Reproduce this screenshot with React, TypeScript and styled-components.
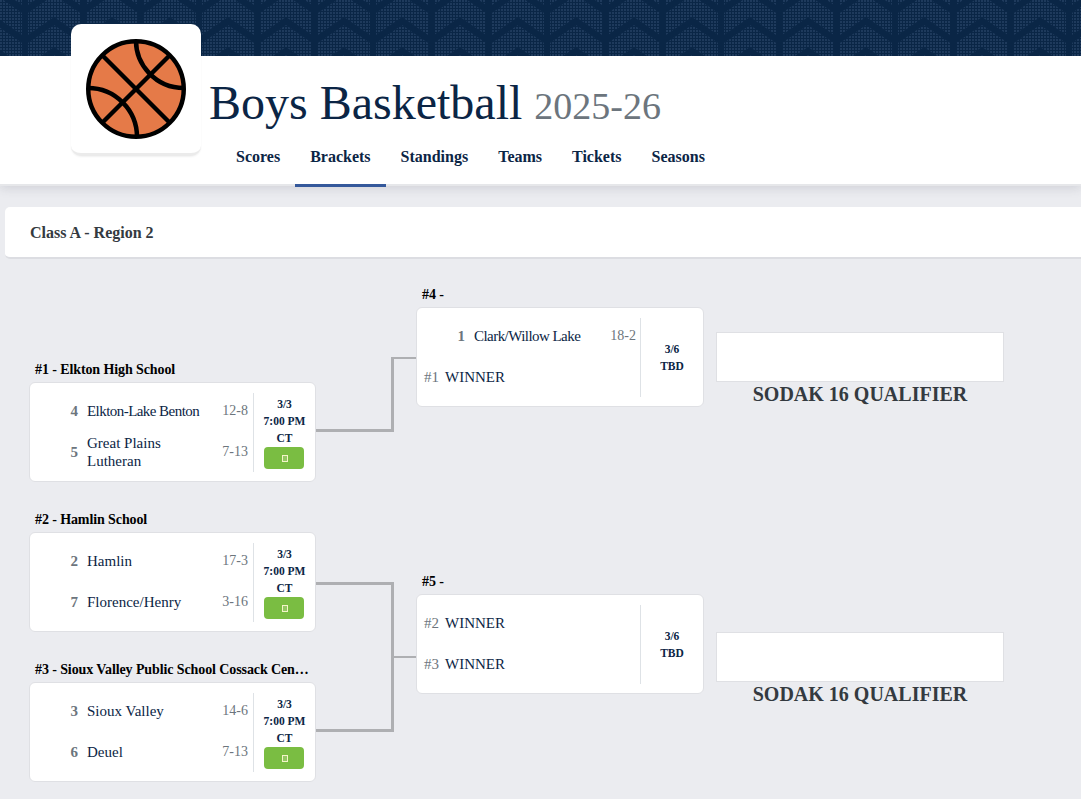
import React from 'react'
import styled, { createGlobalStyle } from 'styled-components'

const GlobalStyle = createGlobalStyle`
  html, body {
    margin: 0;
    padding: 0;
    background: #ebecf0;
    font-family: "Liberation Serif", "Times New Roman", serif;
    color: #0b2545;
  }
  * { box-sizing: border-box; }
`
const Page = styled.div`
  width: 1081px;
  height: 799px;
  overflow: hidden;
`
const Banner = styled.svg`
  display: block;
  width: 100%;
  height: 56px;
`
const Header = styled.header`
  height: 130px;
  background: #fff;
  display: flex;
  padding-left: 71px;
  border-bottom: 2px solid #e6e7ea;
  box-shadow: 0 2px 10px rgba(60, 64, 80, 0.16);
`
const LogoCard = styled.div`
  width: 130px;
  height: 132px;
  margin-top: -32px;
  background: #fff;
  border-radius: 10px;
  border-bottom: 3px solid #ebebeb;
  box-shadow: 0 1px 2px rgba(0, 0, 0, 0.06);
  display: flex;
  align-items: center;
  justify-content: center;
  flex-shrink: 0;
  position: relative;
`
const HeaderBody = styled.div`
  padding-left: 8px;
  display: flex;
  flex-direction: column;
`
const Title = styled.h1`
  margin: 17px 0 0;
  font-size: 48px;
  line-height: 60px;
  font-weight: 400;
  color: #0b2545;
  white-space: nowrap;
`
const Season = styled.span`
  font-size: 38px;
  color: #6c757d;
`
const Nav = styled.nav`
  display: flex;
  margin-top: 9px;
  padding-left: 12px;
`
const NavItem = styled.a<{ $active?: boolean }>`
  height: 42px;
  padding: 3px 15px 0;
  font-size: 16px;
  line-height: 18px;
  font-weight: 700;
  color: #0b2545;
  border-bottom: 3px solid ${p => (p.$active ? '#34589b' : 'transparent')};
`
const Section = styled.div`
  margin: 21px 0 0 5px;
  height: 52px;
  background: #fff;
  border-radius: 5px 0 0 5px;
  border-bottom: 2px solid #dcdde2;
  padding: 17px 0 0 25px;
  font-size: 16px;
  line-height: 18px;
  font-weight: 700;
  color: #343a40;
`
const Bracket = styled.div`
  display: flex;
  padding-left: 29px;
`
const Column = styled.div<{ $top: number; $width: number }>`
  width: ${p => p.$width}px;
  flex-shrink: 0;
  padding-top: ${p => p.$top}px;
  display: flex;
  flex-direction: column;
`
const GameHead = styled.div`
  height: 20px;
  padding: 0 6px 0 6px;
  font-size: 14px;
  line-height: 16px;
  font-weight: 700;
  letter-spacing: -0.1px;
  color: #000;
  white-space: nowrap;
  overflow: hidden;
  text-overflow: ellipsis;
`
const Game = styled.div<{ $gap?: number }>`
  height: 100px;
  margin-bottom: ${p => p.$gap ?? 0}px;
  background: #fff;
  border: 1px solid #dfe0e4;
  border-radius: 6px;
  display: flex;
  padding: 10px 0 9px 0;
`
const Teams = styled.div<{ $wide?: boolean }>`
  flex: 1;
  min-width: 0;
  display: grid;
  grid-template-rows: 41px 41px;
  margin-top: -3px;
  padding-right: ${p => (p.$wide ? 4 : 5)}px;
`
const Team = styled.div`
  display: flex;
  align-items: center;
  font-size: 15px;
  line-height: 18px;
`
const Seed = styled.span`
  width: 48px;
  text-align: right;
  font-weight: 700;
  color: #6c757d;
  flex-shrink: 0;
`
const Name = styled.span<{ $tight?: boolean; $flush?: boolean }>`
  flex: 1;
  padding-left: ${p => (p.$flush ? 0 : 9)}px;
  padding-right: 4px;
  letter-spacing: ${p => (p.$tight ? '-0.55px' : 'normal')};
  color: #0b2545;
`
const Record = styled.span`
  font-size: 14px;
  color: #6c757d;
`
const WinnerSeed = styled.span`
  padding-left: 7px;
  width: 28px;
  color: #6c757d;
  flex-shrink: 0;
`
const Info = styled.div<{ $wide?: boolean }>`
  width: ${p => (p.$wide ? 63 : 62)}px;
  flex-shrink: 0;
  border-left: 1px solid #dee2e6;
  display: flex;
  flex-direction: column;
  align-items: center;
  justify-content: center;
  font-size: 11.5px;
  line-height: 17px;
  font-weight: 700;
  text-align: center;
  color: #0b2545;
`
const Watch = styled.div`
  width: 40px;
  height: 22px;
  margin-right: 1px;
  background: #7abd42;
  border-radius: 4px;
  display: flex;
  align-items: center;
  justify-content: center;
`
const Missing = styled.span`
  width: 6px;
  height: 7px;
  margin-left: 1px;
  border: 1px solid #f4f4c8;
  background: #93c763;
`
const Connectors = styled.div`
  width: 100px;
  flex-shrink: 0;
  display: flex;
  flex-direction: column;
`
const TopLink = styled.div`
  margin-top: 98px;
  height: 75px;
  display: flex;
`
const LinkArm = styled.div`
  width: 78px;
  border-right: 3px solid #aeafb2;
  border-bottom: 3px solid #aeafb2;
`
const LinkTip = styled.div`
  flex: 1;
  height: 2px;
  background: #aeafb2;
`
const BottomLink = styled.div`
  margin-top: 150px;
  height: 150px;
  display: flex;
  align-items: center;
`
const Fork = styled.div`
  width: 78px;
  height: 100%;
  border: 3px solid #aeafb2;
  border-left: 0;
`
const Result = styled.div`
  margin-left: 12px;
  padding-top: 73px;
  display: flex;
  flex-direction: column;
  width: 288px;
`
const ResultBox = styled.div`
  height: 50px;
  background: #fff;
  border: 1px solid #dfe0e4;
`
const ResultLabel = styled.div`
  height: 250px;
  padding-top: 1px;
  text-align: center;
  font-size: 20px;
  line-height: 23px;
  font-weight: 700;
  color: #343a40;
`

const Ball = () => (
  <svg width="102" height="102" viewBox="0 0 102 102" fill="none">
    <circle cx="51" cy="51" r="47.75" fill="#e57a48" stroke="#000" strokeWidth="4.5" />
    <g stroke="#000" strokeWidth="4.5">
      <path d="M18 18 L84 84" />
      <path d="M84 18 L18 84" />
      <path d="M51 3 C51 26 70 50 99 50" />
      <path d="M3 50 C30 50 52 72 52 99" />
    </g>
  </svg>
)

const BannerArt = () => (
  <Banner>
    <defs>
      <pattern id="dots" width="3" height="3" patternUnits="userSpaceOnUse">
        <rect width="3" height="3" fill="#0a2646" />
        <rect width="2" height="2" fill="#1e3a5c" shapeRendering="crispEdges" />
      </pattern>
      <pattern id="bands" width="58" height="30" x="25" y="15" patternUnits="userSpaceOnUse">
        <g stroke="#0a2646" strokeWidth="6.5" fill="none">
          <path d="M0 -4 L29 -24 L58 -4" />
          <path d="M0 26 L29 6 L58 26" />
          <path d="M0 56 L29 36 L58 56" />
          <path d="M0 0 L0 30 M58 0 L58 30" strokeWidth="6" />
        </g>
      </pattern>
    </defs>
    <rect width="100%" height="56" fill="url(#dots)" />
    <rect width="100%" height="56" fill="url(#bands)" />
  </Banner>
)

type Side = { seed: string; name: string; record?: string; tight?: boolean }

type GameCardProps = { sides: Side[]; lines: string[]; watch?: boolean; gap?: number; wide?: boolean }

const GameCard = ({ sides, lines, watch, gap, wide }: GameCardProps) => (
  <Game $gap={gap}>
    <Teams $wide={wide}>
      {sides.map(s =>
        s.record ? (
          <Team key={s.name}>
            <Seed>{s.seed}</Seed>
            <Name $tight={s.tight}>{s.name}</Name>
            <Record>{s.record}</Record>
          </Team>
        ) : (
          <Team key={s.seed}>
            <WinnerSeed>{s.seed}</WinnerSeed>
            <Name $flush>{s.name}</Name>
          </Team>
        )
      )}
    </Teams>
    <Info $wide={wide}>
      {lines.map(l => (
        <div key={l}>{l}</div>
      ))}
      {watch && (
        <Watch>
          <Missing />
        </Watch>
      )}
    </Info>
  </Game>
)

const tipoff = ['3/3', '7:00 PM', 'CT']

export default function App() {
  return (
    <Page>
      <GlobalStyle />
      <BannerArt />
      <Header>
        <LogoCard>
          <Ball />
        </LogoCard>
        <HeaderBody>
          <Title>
            Boys Basketball <Season>2025-26</Season>
          </Title>
          <Nav>
            <NavItem>Scores</NavItem>
            <NavItem $active>Brackets</NavItem>
            <NavItem>Standings</NavItem>
            <NavItem>Teams</NavItem>
            <NavItem>Tickets</NavItem>
            <NavItem>Seasons</NavItem>
          </Nav>
        </HeaderBody>
      </Header>
      <Section>Class A - Region 2</Section>
      <Bracket>
        <Column $top={103} $width={287}>
          <GameHead>#1 - Elkton High School</GameHead>
          <GameCard
            gap={30}
            lines={tipoff}
            watch
            sides={[
              { seed: '4', name: 'Elkton-Lake Benton', record: '12-8', tight: true },
              { seed: '5', name: 'Great Plains Lutheran', record: '7-13' }
            ]}
          />
          <GameHead>#2 - Hamlin School</GameHead>
          <GameCard
            gap={30}
            lines={tipoff}
            watch
            sides={[
              { seed: '2', name: 'Hamlin', record: '17-3' },
              { seed: '7', name: 'Florence/Henry', record: '3-16' }
            ]}
          />
          <GameHead>#3 - Sioux Valley Public School Cossack Center</GameHead>
          <GameCard
            lines={tipoff}
            watch
            sides={[
              { seed: '3', name: 'Sioux Valley', record: '14-6' },
              { seed: '6', name: 'Deuel', record: '7-13' }
            ]}
          />
        </Column>
        <Connectors>
          <TopLink>
            <LinkArm />
            <LinkTip />
          </TopLink>
          <BottomLink>
            <Fork />
            <LinkTip />
          </BottomLink>
        </Connectors>
        <Column $top={28} $width={288}>
          <GameHead>#4 -</GameHead>
          <GameCard
            gap={167}
            wide
            lines={['3/6', 'TBD']}
            sides={[
              { seed: '1', name: 'Clark/Willow Lake', record: '18-2', tight: true },
              { seed: '#1', name: 'WINNER' }
            ]}
          />
          <GameHead>#5 -</GameHead>
          <GameCard
            wide
            lines={['3/6', 'TBD']}
            sides={[
              { seed: '#2', name: 'WINNER' },
              { seed: '#3', name: 'WINNER' }
            ]}
          />
        </Column>
        <Result>
          <ResultBox />
          <ResultLabel>SODAK 16 QUALIFIER</ResultLabel>
          <ResultBox />
          <ResultLabel>SODAK 16 QUALIFIER</ResultLabel>
        </Result>
      </Bracket>
    </Page>
  )
}
